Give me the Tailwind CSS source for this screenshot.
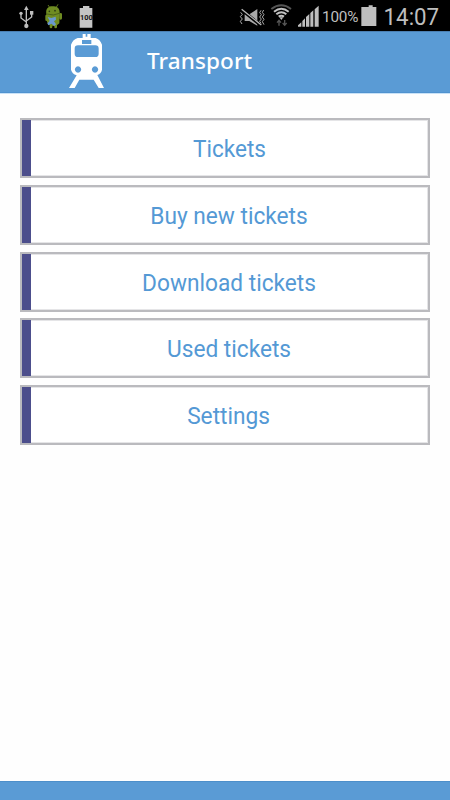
<!DOCTYPE html>
<html lang="en">
<head>
<meta charset="utf-8">
<title>Transport</title>
<script src="https://cdn.jsdelivr.net/npm/@tailwindcss/browser@4"></script>
</head>
<body class="bg-white">
<div class="flex h-[800px] w-[450px] flex-col overflow-hidden bg-[#fefefe] font-['Roboto',sans-serif]">
  <div class="flex h-[31px] shrink-0 bg-black text-[#bebebe]">
    <svg class="h-[31px] w-[110px] shrink-0" viewBox="0 0 330 93">
      <g fill="none" stroke="#bebebe" stroke-width="4">
        <path d="M79 25V78M63 41V54L79 66M95 39V51L79 63"/>
      </g>
      <g fill="#bebebe"><path d="M79 17l7 13H72z"/><circle cx="79" cy="78" r="6.500"/><circle cx="63" cy="40" r="5"/><path d="M90 33h10v11H90z"/></g>
      <g fill="#6f8c22" stroke="#6f8c22">
        <path d="M139 42C136 23 148 18 158 19C171 17 181 25 179 43L178 70Q171 79 159 78Q145 77 141 66Z" stroke="none"/>
        <path d="M144 15l7 10M174 13l-7 12" stroke-width="2.500"/>
        <path d="M140 48v11M182 43v12M153 76v5M167 76v5" stroke-width="8" stroke-linecap="round"/>
      </g>
      <path d="M141 42Q160 49 178 40" stroke="#384b16" stroke-width="2" fill="none"/>
      <circle cx="148" cy="34" r="2.500" fill="#283713"/><circle cx="165" cy="32" r="2.500" fill="#283713"/>
      <path d="M143 51l11 3 13-4 1 9-6 5 6 9-5 5-9-7-9 5-3-6 7-7z" fill="#6999cf"/>
      <path d="M249 18h19v6h9v59h-38V24h10z" fill="#c5c5c5"/>
      <text x="259" y="61" text-anchor="middle" font-family="Roboto,sans-serif" font-size="23" font-weight="700" fill="#111" textLength="38" lengthAdjust="spacingAndGlyphs">100</text>
    </svg>
    <div class="flex-1"></div>
    <svg class="h-[31px] w-[92px] shrink-0" viewBox="0 0 276 93">
      <path d="M44 43h14L82 27V77L58 63H44z" fill="#aaa"/>
      <path d="M36 30L93 77" stroke="#000" stroke-width="9"/>
      <path d="M35 28L94 75" stroke="#b8b8b8" stroke-width="4"/>
      <path d="M32 37l5 6-6 7 6 7-6 7 5 8M93 31l-4 7 5 6-5 7 5 6-5 7 4 6M101 30l-4 7 5 7-5 7 5 7-5 7 5 9" fill="none" stroke="#aaa" stroke-width="3"/>
      <g fill="none" stroke-width="6">
        <path d="M124 27Q154 5 183 27" stroke="#555"/>
        <path d="M132 35Q154 18 176 35M139 43Q154 31 169 43M146 50Q154 44 162 50" stroke="#c2c2c2"/>
      </g>
      <path d="M148 52h12l-6 8z" fill="#c2c2c2"/>
      <path d="M147 77V62M141 68l6-7 6 7M164 60v16M158 69l6 7 6-7" fill="none" stroke="#555" stroke-width="4"/>
      <path d="M204 80V76L214 67V80zM217 80V63L225 55V80zM228 80V51L238 42V80zM241 80V39L250 31V80zM254 80V28L266 17V80z" fill="#bebebe"/>
    </svg>
    <span class="w-[39px] shrink-0 whitespace-nowrap pt-[8px] text-[15.300px] leading-[19px] tracking-[-0.200px]">100%</span>
    <svg class="h-[31px] w-[17px] shrink-0" viewBox="0 0 51 93"><path d="M17 16h12v5h11v57H-5V21h22z" transform="translate(6 0)" fill="#bebebe"/></svg>
    <span class="w-[72px] shrink-0 origin-left scale-x-[0.93] whitespace-nowrap pl-[6px] pt-[3px] text-[24px] leading-[28px]">14:07</span>
  </div>

  <header class="flex h-[63px] shrink-0 border-b border-[#c9e2f7] bg-[#5a9bd5] pl-[50px] shadow-[inset_0_1px_0_#4b80b3,inset_0_-1px_0_#5092cf]">
    <svg class="h-[60px] w-[80px] shrink-0" viewBox="0 9 240 180">
      <path d="M98 18h9v8h5v-8h10v12h-24z" fill="#fff"/>
      <path fill-rule="evenodd" fill="#fff" d="M83 30H137Q150 34 156 50V125Q154 136 142 141L162 180H146L131 155H88L74 180H57L80 142Q66 137 63 125V50Q69 34 83 30ZM96 36V48H124V36ZM84 52Q74 52 74 62V77Q74 87 84 87H136Q146 87 146 77V62Q146 52 136 52ZM84 115a9.500 9.500 0 1 0 .1 0ZM135 115a9.500 9.500 0 1 0 .1 0Z"/>
    </svg>
    <h1 class="whitespace-nowrap pl-[17px] pt-[15px] font-['Noto_Sans',sans-serif] text-[22.500px] font-medium leading-[30px] tracking-[0.100px] text-white">Transport</h1>
  </header>

  <main class="flex flex-1 flex-col gap-[6.670px] px-[20px] pt-[24.330px] text-[24px] text-[#5499d5]">
    <button class="flex h-[60px] shrink-0 border-2 border-[#bababe] bg-white shadow-[inset_0_0_0_1px_#e5e5e7]"><span class="h-full w-[9px] bg-[#4c4e8c]"></span><span class="flex-1 scale-x-[0.94] self-center pt-[2px] text-center">Tickets</span></button>
    <button class="flex h-[60px] shrink-0 border-2 border-[#bababe] bg-white shadow-[inset_0_0_0_1px_#e5e5e7]"><span class="h-full w-[9px] bg-[#4c4e8c]"></span><span class="flex-1 scale-x-[0.945] self-center pt-[2px] pr-[1px] text-center">Buy new tickets</span></button>
    <button class="flex h-[60px] shrink-0 border-2 border-[#bababe] bg-white shadow-[inset_0_0_0_1px_#e5e5e7]"><span class="h-full w-[9px] bg-[#4c4e8c]"></span><span class="flex-1 scale-x-[0.945] self-center pt-[2px] pr-[1px] text-center">Download tickets</span></button>
    <button class="flex h-[60px] shrink-0 border-2 border-[#bababe] bg-white shadow-[inset_0_0_0_1px_#e5e5e7]"><span class="h-full w-[9px] bg-[#4c4e8c]"></span><span class="flex-1 scale-x-[0.945] self-center pt-[2px] pr-[1px] text-center">Used tickets</span></button>
    <button class="flex h-[60px] shrink-0 border-2 border-[#bababe] bg-white shadow-[inset_0_0_0_1px_#e5e5e7]"><span class="h-full w-[9px] bg-[#4c4e8c]"></span><span class="flex-1 scale-x-[0.945] self-center pt-[2px] pr-[2px] text-center">Settings</span></button>
  </main>
  <footer class="h-[19px] shrink-0 border-t border-[#4d8fca] bg-[#5a9bd5]"></footer>
</div>
</body>
</html>
